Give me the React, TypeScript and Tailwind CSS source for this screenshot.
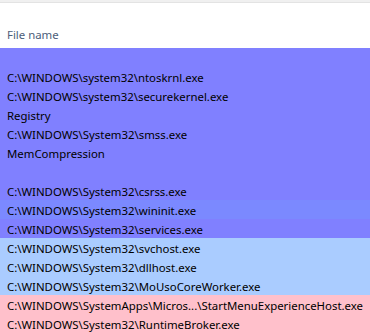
const rows: { text: string; bg: string }[] = [
  { text: '', bg: 'bg-[#8080ff]' },
  { text: 'C:\\WINDOWS\\system32\\ntoskrnl.exe', bg: 'bg-[#8080ff]' },
  { text: 'C:\\WINDOWS\\system32\\securekernel.exe', bg: 'bg-[#8080ff]' },
  { text: 'Registry', bg: 'bg-[#8080ff]' },
  { text: 'C:\\WINDOWS\\System32\\smss.exe', bg: 'bg-[#8080ff]' },
  { text: 'MemCompression', bg: 'bg-[#8080ff]' },
  { text: '', bg: 'bg-[#8080ff]' },
  { text: 'C:\\WINDOWS\\System32\\csrss.exe', bg: 'bg-[#8080ff]' },
  { text: 'C:\\WINDOWS\\System32\\wininit.exe', bg: 'bg-[#7b89ff]' },
  { text: 'C:\\WINDOWS\\System32\\services.exe', bg: 'bg-[#8080ff]' },
  { text: 'C:\\WINDOWS\\System32\\svchost.exe', bg: 'bg-[#aaccff]' },
  { text: 'C:\\WINDOWS\\System32\\dllhost.exe', bg: 'bg-[#aaccff]' },
  { text: 'C:\\WINDOWS\\System32\\MoUsoCoreWorker.exe', bg: 'bg-[#aaccff]' },
  { text: 'C:\\WINDOWS\\SystemApps\\Micros...\\StartMenuExperienceHost.exe', bg: 'bg-[#ffc0cb]' },
  { text: 'C:\\WINDOWS\\System32\\RuntimeBroker.exe', bg: 'bg-[#ffc0cb]' },
]

export default function App() {
  return (
    <div className="w-[370px] h-[333px] overflow-hidden bg-white font-['Noto_Sans',sans-serif] text-[11.4px] text-black">
      <div className="h-[3px] bg-[#f0f0f0] border-b border-[#e3e3e3]" />
      <div className="h-[45px] flex items-end pl-[7px] pb-[4px] text-[#4c607a]">
        <span className="leading-[19px]">File name</span>
      </div>
      {rows.map((r, i) => (
        <div key={i} className={`h-[19px] flex items-center pt-[2px] pl-[7px] whitespace-nowrap ${r.bg}`}>
          {r.text}
        </div>
      ))}
    </div>
  )
}
